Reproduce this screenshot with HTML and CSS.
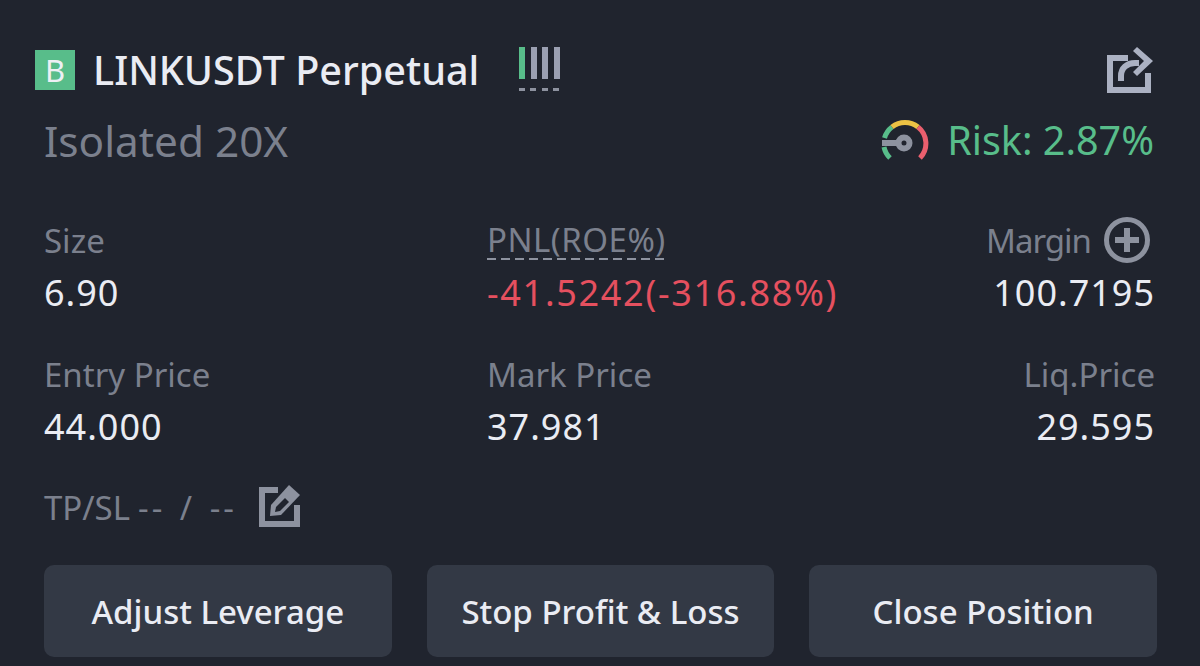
FILE: index.html
```html
<!DOCTYPE html>
<html lang="en">
<head>
    <meta charset="UTF-8">
    <meta name="viewport" content="width=device-width, initial-scale=1.0">
    <title>LINKUSDT Perpetual</title>
    <link rel="stylesheet" href="styles.css">
</head>
<body>
    <main class="card">
        <div class="title-row">
            <span class="side-badge">B</span>
            <h1 class="symbol">LINKUSDT Perpetual</h1>
            <div class="adl">
                <div class="adl-bars">
                    <span class="adl-bar adl-bar-on"></span>
                    <span class="adl-bar"></span>
                    <span class="adl-bar"></span>
                    <span class="adl-bar"></span>
                </div>
                <div class="adl-dash"></div>
            </div>
            <svg class="share-icon" viewBox="0 0 46 46" width="46" height="46" aria-hidden="true">
                <path d="M21 8H0v38h44V26h-6v14H6V14h15z" fill="#abb1c2"/>
                <path d="M14 34v-5c0-8 6-13 14-13h4" fill="none" stroke="#abb1c2" stroke-width="6"/>
                <path d="M30 0l16 14-16 15-4-4 11-11-11-10z" fill="#abb1c2"/>
            </svg>
        </div>

        <div class="sub-row">
            <span class="mode">Isolated 20X</span>
            <div class="risk">
                <svg class="gauge" viewBox="0 0 48 42" width="48" height="42" aria-hidden="true">
                    <path d="M9 39A21 21 0 0 1 3 28" fill="none" stroke="#58bd8a" stroke-width="5"/>
                    <path d="M3.5 19A21 21 0 0 1 11 8" fill="none" stroke="#58bd8a" stroke-width="5"/>
                    <path d="M11 8A21 21 0 0 1 37 8" fill="none" stroke="#ecc244" stroke-width="5"/>
                    <path d="M37 8A21 21 0 0 1 39 39" fill="none" stroke="#ea5f6e" stroke-width="5"/>
                    <path d="M1 24h16" stroke="#8d929f" stroke-width="6"/>
                    <circle cx="23" cy="24" r="5.5" fill="none" stroke="#8d929f" stroke-width="6"/>
                </svg>
                <span>Risk: 2.87%</span>
            </div>
        </div>

        <div class="stats">
            <div class="stat">
                <div class="stat-label">Size</div>
                <div class="stat-value">6.90</div>
            </div>
            <div class="stat">
                <div class="stat-label"><span class="dashed">PNL(ROE%)</span></div>
                <div class="stat-value loss">-41.5242(-316.88%)</div>
            </div>
            <div class="stat stat-end">
                <div class="stat-label">
                    <span class="margin-text">Margin</span>
                    <svg class="plus-icon" viewBox="0 0 46 46" width="46" height="46" aria-hidden="true">
                        <circle cx="23" cy="23" r="20.5" fill="none" stroke="#8d929f" stroke-width="5"/>
                        <path d="M23 11v24M11 23h24" stroke="#8d929f" stroke-width="6"/>
                    </svg>
                </div>
                <div class="stat-value">100.7195</div>
            </div>
            <div class="stat">
                <div class="stat-label">Entry Price</div>
                <div class="stat-value">44.000</div>
            </div>
            <div class="stat">
                <div class="stat-label">Mark Price</div>
                <div class="stat-value">37.981</div>
            </div>
            <div class="stat stat-end">
                <div class="stat-label">Liq.Price</div>
                <div class="stat-value">29.595</div>
            </div>
        </div>

        <div class="tpsl">
            <span>TP/SL</span>
            <span class="tpsl-values">-- / --</span>
            <svg class="edit-icon" viewBox="0 0 44 44" width="44" height="44" aria-hidden="true">
                <path d="M20 4H1v40h41V22h-6v16H7V10h13z" fill="#8d929f"/>
                <path d="M12 33l1-11L31 2l11 10-19 20z" fill="#8d929f"/>
                <path d="M18 24l-1 5 5-1 9-9-4-4z" fill="#20242e"/>
            </svg>
        </div>

        <div class="actions">
            <button type="button" class="action-btn">Adjust Leverage</button>
            <button type="button" class="action-btn">Stop Profit &amp; Loss</button>
            <button type="button" class="action-btn">Close Position</button>
        </div>
    </main>
</body>
</html>
```

FILE: styles.css
```css
* {
    box-sizing: border-box;
}
html, body {
    margin: 0;
    padding: 0;
    height: 100%;
}
body {
    background-color: #20242e;
    font-family: "Noto Sans", "Open Sans", sans-serif;
    overflow: hidden;
}
.card {
    height: 666px;
    padding: 46px 43px 0 44px;
}
.title-row {
    display: flex;
    align-items: center;
    height: 48px;
    margin-left: -9px;
}
.side-badge {
    width: 40px;
    height: 40px;
    background-color: #58bd8a;
    color: #eef0f5;
    font-size: 31px;
    line-height: 40px;
    text-align: center;
}
.symbol {
    margin: 0 0 0 18px;
    font-size: 39.6px;
    font-weight: 500;
    line-height: 48px;
    color: #eaecf3;
    white-space: nowrap;
}
.adl {
    margin-left: 40px;
    margin-top: -2px;
}
.adl-bars {
    display: flex;
    gap: 5.5px;
}
.adl-bar {
    width: 6px;
    height: 32px;
    background-color: #9ba0b2;
}
.adl-bar-on {
    background-color: #58bd8a;
}
.adl-dash {
    height: 3px;
    margin-top: 9px;
    background: repeating-linear-gradient(90deg, #8d929f 0 6px, transparent 6px 11.5px);
}
.share-icon {
    margin-left: auto;
    margin-right: 4px;
}
.sub-row {
    display: flex;
    justify-content: space-between;
    align-items: center;
    height: 48px;
    margin-top: 22px;
}
.mode {
    font-size: 42.3px;
    color: #7b808d;
}
.risk {
    display: flex;
    align-items: center;
    gap: 18px;
    margin-right: 3px;
    font-size: 39.5px;
    color: #58bd8a;
}
.stats {
    display: grid;
    grid-template-columns: 443px 1fr auto;
    row-gap: 30px;
    margin-top: 54px;
}
.stat-label {
    display: flex;
    align-items: center;
    height: 46px;
    padding-bottom: 2px;
    font-size: 33px;
    color: #7b808d;
}
.stat-value {
    height: 58px;
    line-height: 58px;
    font-size: 36px;
    letter-spacing: 1px;
    color: #eaecf3;
    white-space: nowrap;
}
.stat-end {
    padding-right: 2px;
    text-align: right;
}
.stat-end .stat-label {
    justify-content: flex-end;
}
.margin-text {
    letter-spacing: -1px;
}
.plus-icon {
    margin-left: 13px;
    margin-right: 5px;
    flex: none;
}
.loss {
    letter-spacing: 1.7px;
    color: #e5505f;
}
.dashed {
    padding-bottom: 1px;
    background: repeating-linear-gradient(90deg, #8d929f 0 9px, transparent 9px 14px) left bottom / 100% 2px no-repeat;
    letter-spacing: 0.5px;
    line-height: 38px;
}
.tpsl {
    display: flex;
    align-items: center;
    height: 46px;
    margin-top: 28px;
    font-size: 33px;
    color: #7b808d;
}
.tpsl-values {
    margin-left: 8px;
    letter-spacing: 3px;
    word-spacing: 3px;
}
.edit-icon {
    margin-left: 21px;
    margin-bottom: 4px;
}
.actions {
    display: flex;
    gap: 35px;
    margin-top: 35px;
}
.action-btn {
    flex: 1;
    height: 92px;
    padding: 0;
    border: none;
    border-radius: 10px;
    background-color: #333945;
    color: #eaecf3;
    font-family: inherit;
    font-size: 33px;
    font-weight: 500;
}
```
